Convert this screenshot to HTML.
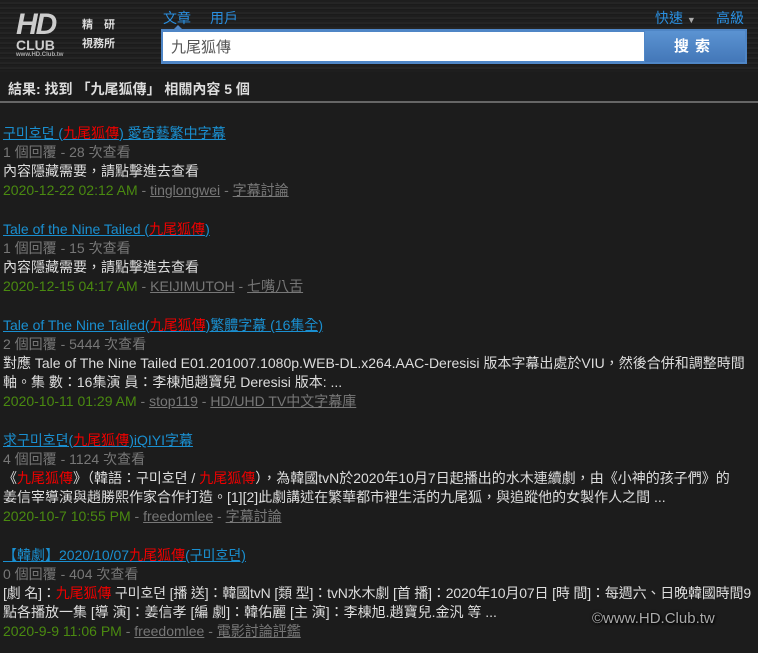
<!DOCTYPE html>
<html><head><meta charset="utf-8"><style>
*{margin:0;padding:0;box-sizing:border-box}
body{width:758px;height:653px;background:#1c1c1c;font-family:"Liberation Sans","Noto Sans CJK TC",sans-serif;font-size:14px;color:#ddd;overflow:hidden;position:relative}
.hdr{position:absolute;left:0;top:0;width:758px;height:72px;background:repeating-linear-gradient(180deg,#1e1e1e 0,#1e1e1e 2px,#2a2a2a 3px,#161616 5px)}
.logo{position:absolute;left:16px;top:12px;color:#ddd;font-weight:bold}
.nav{position:absolute;top:8px;color:#2a8fe0;font-size:14px}
.sb{position:absolute;left:161px;top:29px;width:586px;height:35px;background:#4f86c6}
.in{position:absolute;left:163px;top:32px;width:481px;height:29px;background:#fff;color:#555;font-size:15px;padding:4px 8px}
.bt{position:absolute;left:645px;top:31px;width:100px;height:31px;background:linear-gradient(#5b93d2,#4377b8);color:#fff;font-weight:bold;font-size:15px;text-align:center;line-height:31px;letter-spacing:6px}
.res{position:absolute;left:0;top:72px;width:758px;height:31px;border-bottom:2px solid #666;font-weight:bold;padding:7px 8px;color:#ddd}
.l{position:absolute;left:3px;white-space:nowrap;line-height:19px}
a{color:#1a8fd0;text-decoration:underline}
.r{color:#e00}
.g{color:#777}
.gr{color:#4a8a10}
.u{color:#777;text-decoration:underline}
.wm{position:absolute;left:592px;top:610px;font-size:15px;color:#aaa;text-shadow:1px 1px 2px #000,0 0 3px #000}
</style></head><body>
<div class="hdr"></div>
<div class="logo"><div style="font-size:30px;line-height:26px;letter-spacing:-2px;color:#ccc;font-style:italic">HD</div><div style="font-size:14px;line-height:14px;color:#ccc">CLUB</div><div style="font-size:6px;color:#aaa">www.HD.Club.tw</div></div>
<div style="position:absolute;left:82px;top:16px;font-size:11px;color:#ddd;font-weight:bold;line-height:19px">精　研<br>視務所</div>
<div class="nav" style="left:163px">文章</div><div class="nav" style="left:210px">用戶</div>
<div style="position:absolute;left:174px;top:25px;width:0;height:0;border:4px solid transparent;border-bottom-color:#4f86c6;border-top:0"></div>
<div class="nav" style="left:655px">快速 <span style="color:#aaa;font-size:9px">▼</span></div><div class="nav" style="left:716px">高級</div>
<div class="sb"></div><div class="in">九尾狐傳</div><div class="bt">搜索</div>
<div class="res">結果: 找到 「九尾狐傳」 相關內容 5 個</div>

<div class="l" style="top:124px"><a href="#">구미호뎐 (<span class="r">九尾狐傳</span>) 愛奇藝繁中字幕</a></div>
<div class="l g" style="top:143px">1 個回覆 - 28 次查看</div>
<div class="l" style="top:162px">內容隱藏需要，請點擊進去查看</div>
<div class="l" style="top:181px"><span class="gr">2020-12-22 02:12 AM</span> <span class="g">-</span> <span class="u">tinglongwei</span> <span class="g">-</span> <span class="u">字幕討論</span></div>

<div class="l" style="top:220px"><a href="#">Tale of the Nine Tailed (<span class="r">九尾狐傳</span>)</a></div>
<div class="l g" style="top:239px">1 個回覆 - 15 次查看</div>
<div class="l" style="top:258px">內容隱藏需要，請點擊進去查看</div>
<div class="l" style="top:277px"><span class="gr">2020-12-15 04:17 AM</span> <span class="g">-</span> <span class="u">KEIJIMUTOH</span> <span class="g">-</span> <span class="u">七嘴八舌</span></div>

<div class="l" style="top:316px"><a href="#">Tale of The Nine Tailed(<span class="r">九尾狐傳</span>)繁體字幕 (16集全)</a></div>
<div class="l g" style="top:335px">2 個回覆 - 5444 次查看</div>
<div class="l" style="top:354px">對應 Tale of The Nine Tailed E01.201007.1080p.WEB-DL.x264.AAC-Deresisi 版本字幕出處於VIU，然後合併和調整時間</div>
<div class="l" style="top:373px">軸。集 數：16集演 員：李棟旭趙寶兒 Deresisi 版本: ...</div>
<div class="l" style="top:392px"><span class="gr">2020-10-11 01:29 AM</span> <span class="g">-</span> <span class="u">stop119</span> <span class="g">-</span> <span class="u">HD/UHD TV中文字幕庫</span></div>

<div class="l" style="top:431px"><a href="#">求구미호뎐(<span class="r">九尾狐傳</span>)iQIYI字幕</a></div>
<div class="l g" style="top:450px">4 個回覆 - 1124 次查看</div>
<div class="l" style="top:469px">《<span class="r">九尾狐傳</span>》（韓語：구미호뎐 / <span class="r">九尾狐傳</span>），為韓國tvN於2020年10月7日起播出的水木連續劇，由《小神的孩子們》的</div>
<div class="l" style="top:488px">姜信宰導演與趙勝熙作家合作打造。[1][2]此劇講述在繁華都市裡生活的九尾狐，與追蹤他的女製作人之間 ...</div>
<div class="l" style="top:507px"><span class="gr">2020-10-7 10:55 PM</span> <span class="g">-</span> <span class="u">freedomlee</span> <span class="g">-</span> <span class="u">字幕討論</span></div>

<div class="l" style="top:546px"><a href="#">【韓劇】2020/10/07<span class="r">九尾狐傳</span>(구미호뎐)</a></div>
<div class="l g" style="top:565px">0 個回覆 - 404 次查看</div>
<div class="l" style="top:584px;letter-spacing:-0.15px">[劇 名]：<span class="r">九尾狐傳</span> 구미호뎐 [播 送]：韓國tvN [類 型]：tvN水木劇 [首 播]：2020年10月07日 [時 間]：每週六、日晚韓國時間9</div>
<div class="l" style="top:603px">點各播放一集 [導 演]：姜信孝 [編 劇]：韓佑麗 [主 演]：李棟旭.趙寶兒.金汎 等 ...</div>
<div class="l" style="top:622px"><span class="gr">2020-9-9 11:06 PM</span> <span class="g">-</span> <span class="u">freedomlee</span> <span class="g">-</span> <span class="u">電影討論評鑑</span></div>
<div class="wm">©www.HD.Club.tw</div>
</body></html>
